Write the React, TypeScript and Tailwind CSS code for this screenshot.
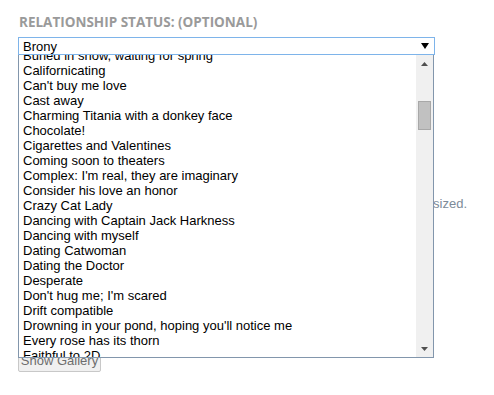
import React from "react";

const items = [
  "Buried in snow, waiting for spring",
  "Californicating",
  "Can't buy me love",
  "Cast away",
  "Charming Titania with a donkey face",
  "Chocolate!",
  "Cigarettes and Valentines",
  "Coming soon to theaters",
  "Complex: I'm real, they are imaginary",
  "Consider his love an honor",
  "Crazy Cat Lady",
  "Dancing with Captain Jack Harkness",
  "Dancing with myself",
  "Dating Catwoman",
  "Dating the Doctor",
  "Desperate",
  "Don't hug me; I'm scared",
  "Drift compatible",
  "Drowning in your pond, hoping you'll notice me",
  "Every rose has its thorn",
  "Faithful to 2D",
  "Fandom widow",
];

export default function App() {
  return (
    <div className="relative w-[494px] h-[395px] bg-white overflow-hidden" style={{ fontFamily: '"Liberation Sans", Arial, sans-serif' }}>
      <div className="pl-[18px] pt-[13px]">
        <div
          className="text-[13.5px] leading-[18px] font-bold uppercase text-[#9a9a9a] pl-[1px]"
          style={{ fontFamily: '"Open Sans", sans-serif' }}
        >
          Relationship Status: (Optional)
        </div>
        <div className="mt-[6px] w-[417px] h-[18px] border border-[#7eb4ea] bg-white flex items-center justify-between pl-[4px] pr-[5px] text-[13px] text-black">
          <span className="leading-[15px]">Brony</span>
          <svg width="8" height="7" viewBox="0 0 8 7">
            <path d="M0 0 H8 L4 6 Z" fill="#000" />
          </svg>
        </div>
        <div className="h-[141px]" />
        <div className="w-[449px] flex justify-end">
          <p className="text-[13px] leading-[15px] text-[#7d8b99] whitespace-nowrap">
            Images will be automatically resized.
          </p>
        </div>
        <div className="h-[137px]" />
        <button className="h-[23px] w-[83px] border border-[#c8c8c8] rounded-[2px] bg-[#f0f0f0] text-[13px] text-[#6d6d6d] leading-[15px] whitespace-nowrap">
          Show Gallery
        </button>
      </div>

      <div className="absolute left-[18px] top-[55px] w-[416px] h-[303px] bg-white border border-t-0 border-[#8296ac] flex text-[13px] text-black">
        <div className="flex-1 overflow-hidden">
          <ul className="mt-[-7px]">
            {items.map((t) => (
              <li key={t} className="h-[15px] leading-[15px] pl-[4px] whitespace-nowrap">
                {t}
              </li>
            ))}
          </ul>
        </div>
        <div className="w-[17px] bg-[#f0f0f0] flex flex-col items-center">
          <div className="h-[17px] flex items-center justify-center">
            <svg width="7" height="4" viewBox="0 0 7 4">
              <path d="M3.5 0 L7 4 H0 Z" fill="#505050" />
            </svg>
          </div>
          <div className="mt-[29px] w-[13px] h-[29px] bg-[#c1c1c1] border border-[#a8a8a8]" />
          <div className="flex-1" />
          <div className="h-[17px] flex items-center justify-center">
            <svg width="7" height="4" viewBox="0 0 7 4">
              <path d="M0 0 H7 L3.5 4 Z" fill="#505050" />
            </svg>
          </div>
        </div>
      </div>
    </div>
  );
}
